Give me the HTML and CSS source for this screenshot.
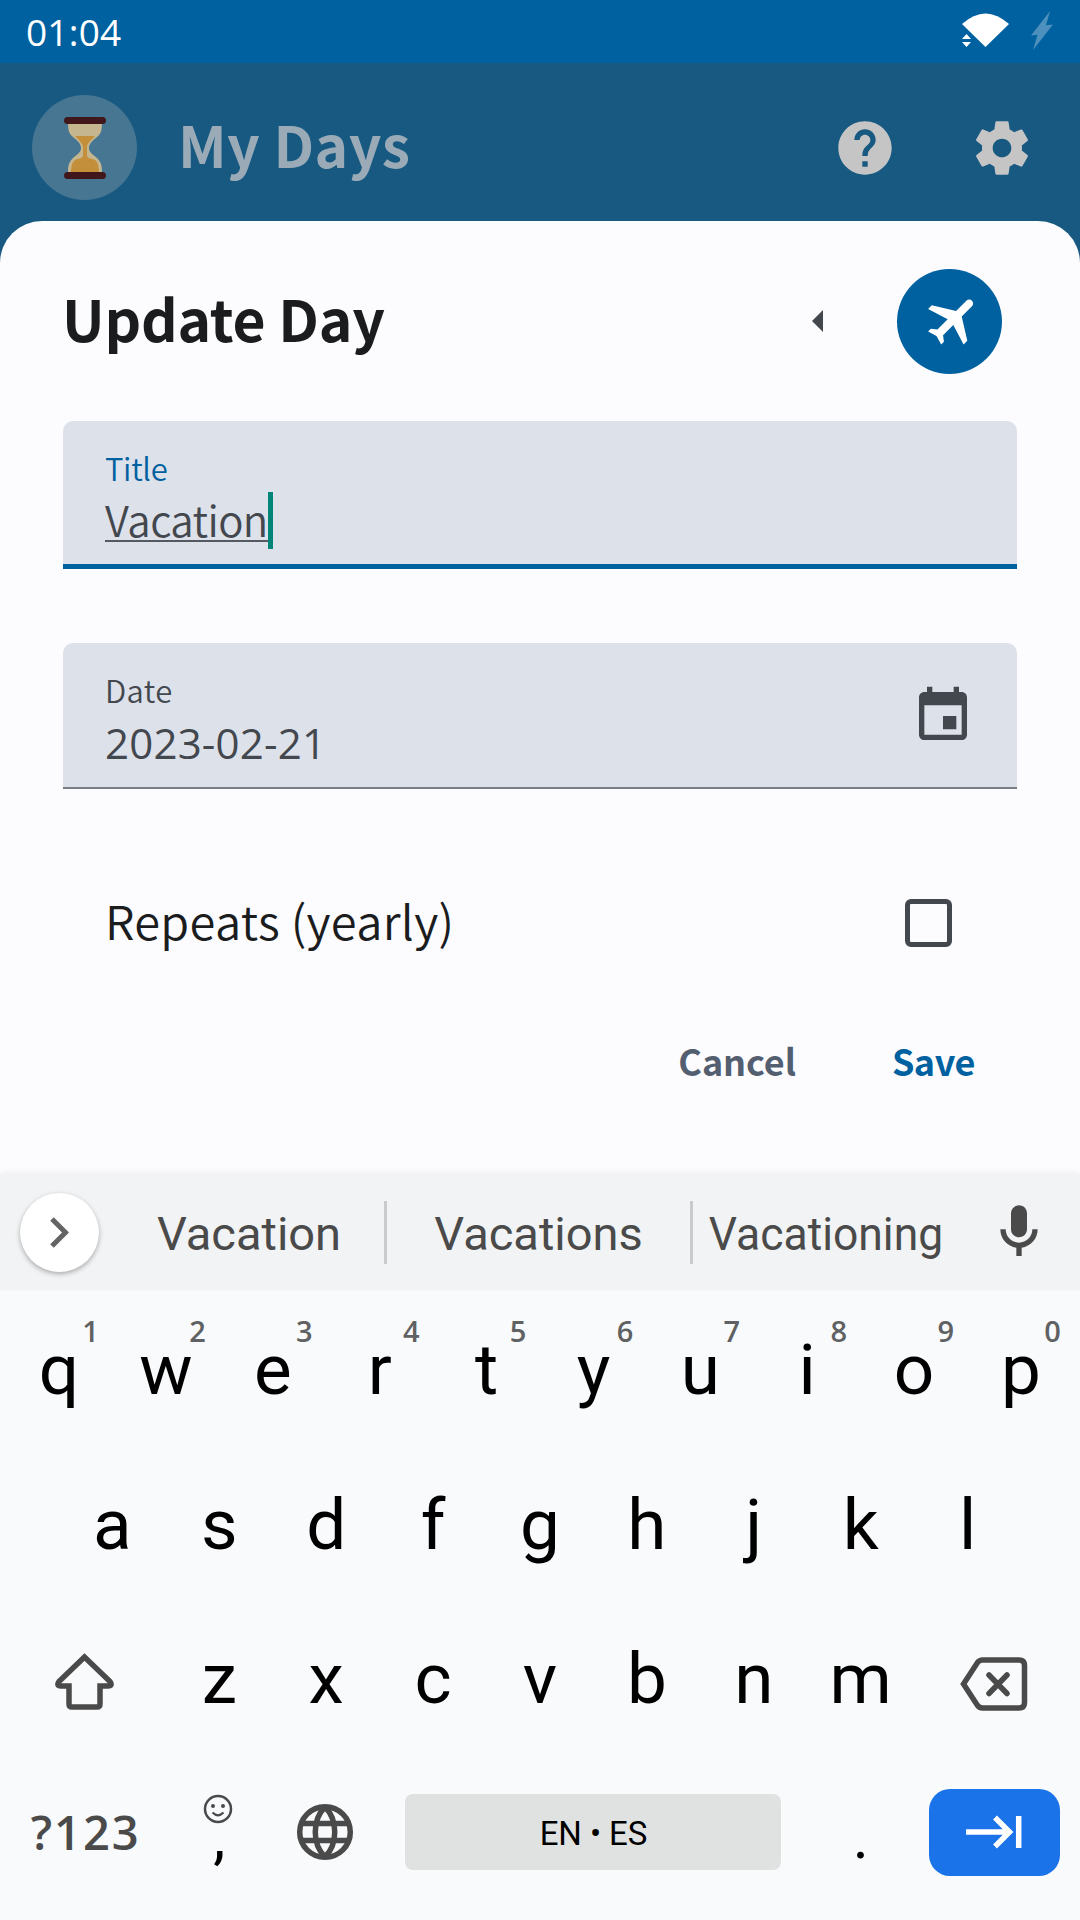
FILE: index.html
```
<!DOCTYPE html>
<html lang="en">
<head>
<meta charset="utf-8">
<title>My Days</title>
<link rel="stylesheet" href="styles.css">
</head>
<body>
<header class="status">
  <span class="clock">01:04</span>
  <svg class="status-icons" viewBox="0 0 96 44">
    <path fill="#fff" d="M4 17Q27.500-4 51 17L27.500 40Z"/>
    <path fill="#fff" d="M4 32l4.500-5 4.500 5zM4 35h9l-4.500 5z"/>
    <path fill="#4d90bd" d="M92 4L73 28.500l6.500-.7L75 43 95 17.500l-7 .7z"/>
  </svg>
</header>

<div class="appbar">
  <span class="logo">
    <svg width="42" height="62" viewBox="0 0 42 62">
      <path fill="#c5b690" d="M4 5h34c0 8-1 12-5 15-5 4-8 7-8 11s3 6 8 10c4 4 5 7 5 15H4c0-8 1-11 5-15 5-4 8-6 8-10s-3-7-8-11c-4-3-5-7-5-15z"/>
      <path fill="#c48f3a" d="M11 19h20c-4 4-8 8-8 11v9c1 3 5 2 8 4 3 2 4 7 4 13H7c0-6 1-11 4-13 3-2 7-1 8-4v-9c0-3-4-7-8-11z"/>
      <rect width="42" height="7" rx="3.500" fill="#40181c"/>
      <rect y="55" width="42" height="7" rx="3.500" fill="#40181c"/>
    </svg>
  </span>
  <h1 class="app-title">My Days</h1>
  <svg class="icon bar-icon" viewBox="0 0 24 24"><path d="M12 2C6.480 2 2 6.480 2 12s4.480 10 10 10 10-4.480 10-10S17.520 2 12 2zm1 17h-2v-2h2v2zm2.070-7.750l-.9.920C13.450 12.900 13 13.500 13 15h-2v-.5c0-1.100.45-2.100 1.170-2.830l1.240-1.260c.37-.36.59-.86.59-1.410 0-1.100-.9-2-2-2s-2 .9-2 2H8c0-2.210 1.790-4 4-4s4 1.790 4 4c0 .88-.36 1.680-.93 2.250z"/></svg>
  <svg class="icon bar-icon" viewBox="0 0 24 24"><path d="M19.430 12.980c.04-.32.07-.64.07-.98s-.03-.66-.07-.98l2.110-1.650c.19-.15.24-.42.12-.64l-2-3.460c-.12-.22-.39-.3-.61-.22l-2.490 1c-.52-.4-1.080-.73-1.690-.98l-.38-2.650C14.460 2.180 14.250 2 14 2h-4c-.25 0-.46.18-.49.42l-.38 2.650c-.61.25-1.170.59-1.690.98l-2.490-1c-.23-.09-.49 0-.61.22l-2 3.460c-.13.22-.07.49.12.64l2.110 1.650c-.04.32-.07.65-.07.98s.03.66.07.98l-2.110 1.650c-.19.15-.24.42-.12.64l2 3.460c.12.22.39.3.61.22l2.490-1c.52.4 1.080.73 1.690.98l.38 2.650c.03.24.24.42.49.42h4c.25 0 .46-.18.49-.42l.38-2.650c.61-.25 1.170-.59 1.690-.98l2.490 1c.23.09.49 0 .61-.22l2-3.460c.12-.22.07-.49-.12-.64l-2.110-1.650zM12 15.500c-1.930 0-3.500-1.570-3.500-3.500s1.570-3.500 3.500-3.500 3.500 1.570 3.500 3.500-1.570 3.500-3.500 3.500z"/></svg>
</div>

<main class="sheet">
  <div class="sheet-head">
    <h2 class="sheet-title">Update Day</h2>
    <svg class="caret-left" viewBox="0 0 11 22"><path d="M11 0v22L0 11z"/></svg>
    <span class="badge">
      <svg width="105" height="105" viewBox="0 0 105 105"><path fill="#fff" transform="translate(56.300 50.300) rotate(45) scale(2.640) translate(-11.500 -12)" d="M21 16v-2l-8-5V3.500c0-.83-.67-1.500-1.500-1.500S10 2.670 10 3.500V9l-8 5v2l8-2.500V19l-2 1.500V22l3.500-1 3.500 1v-1.500L13 19v-5.500l8 2.500z"/></svg>
    </span>
  </div>

  <div class="field field-active">
    <div class="field-text">
      <label class="label">Title</label>
      <div class="value"><span class="composing">Vacation</span><i class="cursor"></i></div>
    </div>
  </div>

  <div class="field">
    <div class="field-text">
      <label class="label label-date">Date</label>
      <div class="value digits">2023-02-21</div>
    </div>
    <svg class="icon date-icon" viewBox="0 0 24 24"><path d="M17 12h-5v5h5v-5zM16 1v2H8V1H6v2H5c-1.110 0-1.990.9-1.990 2L3 19c0 1.100.89 2 2 2h14c1.100 0 2-.9 2-2V5c0-1.100-.9-2-2-2h-1V1h-2zm3 18H5V8h14v11z"/></svg>
  </div>

  <div class="repeat">
    <span class="repeat-label">Repeats (yearly)</span>
    <span class="checkbox"></span>
  </div>

  <div class="actions">
    <span class="btn cancel">Cancel</span>
    <span class="btn save">Save</span>
  </div>
</main>

<section class="keyboard">
  <div class="strip">
    <span class="expand"><svg width="19" height="31" viewBox="0 0 19 31"><path d="M2 2l13.500 13.500L2 29" fill="none" stroke="#646464" stroke-width="5"/></svg></span>
    <span class="word w1">Vacation</span>
    <span class="word w2">Vacations</span>
    <span class="word w3"><span class="squeeze">Vacationing</span></span>
    <svg class="icon mic" viewBox="0 0 24 24"><path d="M12 14c1.660 0 3-1.340 3-3V5c0-1.660-1.340-3-3-3S9 3.340 9 5v6c0 1.660 1.340 3 3 3zM17 11c0 2.760-2.240 5-5 5s-5-2.240-5-5H5c0 3.530 2.610 6.430 6 6.920V21h2v-3.080c3.390-.49 6-3.390 6-6.920z"/></svg>
  </div>

  <div class="row">
    <span class="key">q<sup>1</sup></span><span class="key">w<sup>2</sup></span><span class="key">e<sup>3</sup></span><span class="key">r<sup>4</sup></span><span class="key">t<sup>5</sup></span><span class="key">y<sup>6</sup></span><span class="key">u<sup>7</sup></span><span class="key">i<sup>8</sup></span><span class="key">o<sup>9</sup></span><span class="key">p<sup>0</sup></span>
  </div>
  <div class="row">
    <span class="key">a</span><span class="key">s</span><span class="key">d</span><span class="key">f</span><span class="key">g</span><span class="key">h</span><span class="key">j</span><span class="key">k</span><span class="key">l</span>
  </div>
  <div class="row">
    <span class="key wide"><svg class="glyph shift" width="64" height="64" viewBox="0 0 64 64"><path d="M31.500 7L6 31.500q-3 4.500 2 4.500h8v18q0 3 3 3h25q3 0 3-3V36h8q5 0 2-4.500z"/></svg></span>
    <span class="key">z</span><span class="key">x</span><span class="key">c</span><span class="key">v</span><span class="key">b</span><span class="key">n</span><span class="key">m</span>
    <span class="key wide"><svg class="glyph back" width="68" height="54" viewBox="0 0 68 54"><path d="M3.500 27L17.500 5.500Q19.500 3 22.500 3H59q5.500 0 5.500 5.500v37Q64.500 51 59 51H22.500q-3 0-5-2.500zM29 18l18 18.500M47 18L29 36.500" stroke-linecap="round"/></svg></span>
  </div>
  <div class="row row-bottom">
    <span class="key wide symbols">?123</span>
    <span class="key comma">
      <svg class="smile" width="30" height="30" viewBox="0 0 30 30"><circle cx="15" cy="15" r="13" fill="none" stroke="#4a4a4a" stroke-width="2.500"/><circle cx="10" cy="12" r="2" fill="#4a4a4a"/><circle cx="20" cy="12" r="2" fill="#4a4a4a"/><path d="M9.500 18.500q5.500 5.500 11 0" fill="none" stroke="#4a4a4a" stroke-width="2.200"/></svg>
      <span class="punct">,</span>
    </span>
    <span class="key"><svg class="glyph globe" width="58" height="58" viewBox="0 0 58 58"><circle cx="29" cy="29" r="25.300"/><path d="M5 20.500h48M5 37.500h48M29 4C16 17 16 41 29 54M29 4c13 13 13 37 0 50"/></svg></span>
    <span class="key space"><span class="spacebar">EN • ES</span></span>
    <span class="key"><span class="punct period">.</span></span>
    <span class="key wide"><span class="enter"><svg width="58" height="34" viewBox="0 0 58 34" fill="none" stroke="#fff" stroke-width="5.500"><path d="M1 17h45M30 2.500L44.500 17 30 31.500M53.700 1v32"/></svg></span></span>
  </div>
</section>
</body>
</html>
```
FILE: styles.css
```
* { box-sizing: border-box; }
body {
  margin: 0;
  width: 1080px;
  height: 1920px;
  overflow: hidden;
  background: #185981;
  font-family: "Noto Sans CJK SC", "Open Sans", sans-serif;
  color: #1b1c1e;
}
h1, h2 { margin: 0; }
svg { display: block; flex: none; }
.icon { width: 64px; height: 64px; fill: currentColor; }

.status {
  display: flex;
  justify-content: space-between;
  height: 63px;
  padding: 7px 26px 0 26px;
  background: #0061a0;
  color: #fff;
}
.clock { font: 37px/49px "Open Sans", sans-serif; letter-spacing: 0.2px; }
.status-icons { width: 96px; height: 44px; }

.appbar {
  display: flex;
  align-items: center;
  height: 158px;
  padding: 11px 46px 0 32px;
  color: #c5c5c5;
}
.logo {
  display: flex;
  align-items: center;
  justify-content: center;
  width: 105px;
  height: 105px;
  border-radius: 50%;
  background: #467691;
}
.app-title {
  flex: 1;
  margin: -9px 0 0 41px;
  font-size: 57px;
  line-height: 80px;
  font-weight: 700;
  letter-spacing: 0.4px;
  color: #9aabb7;
}
.bar-icon + .bar-icon { margin-left: 73px; }

.sheet {
  display: flex;
  flex-direction: column;
  height: 953px;
  padding: 0 63px;
  border-radius: 42px 42px 0 0;
  background: #fcfcff;
}
.sheet-head { display: flex; align-items: center; height: 200px; padding-right: 15px; }
.sheet-title { flex: 1; margin: -8px 0 0 -1px; font-size: 57px; line-height: 80px; font-weight: 700; letter-spacing: -0.2px; }
.caret-left { width: 11px; height: 22px; margin-right: 74px; fill: #43474e; }
.badge { width: 105px; height: 105px; border-radius: 50%; background: #0061a0; }

.field {
  display: flex;
  justify-content: space-between;
  height: 146px;
  margin-bottom: 76px;
  padding: 27px 42px 0;
  border-bottom: 2px solid #7a7d85;
  border-radius: 10px 10px 0 0;
  background: #dde1ea;
  color: #43474e;
}
.field-active { height: 148px; margin-bottom: 74px; border-bottom: 5px solid #0061a0; }
.label { display: block; font-size: 31px; line-height: 40px; font-weight: 350; letter-spacing: -0.3px; }
.label-date { letter-spacing: 0.4px; }
.field-active .label { color: #0061a0; }
.value { display: flex; height: 57px; margin-top: 4px; font-size: 42px; line-height: 57px; }
.digits { font-family: "Open Sans", sans-serif; letter-spacing: 0.2px; }
.composing { width: 163px; height: 50px; border-bottom: 2px solid #555961; font-weight: 350; line-height: 54px; letter-spacing: -0.6px; }
.cursor { width: 5px; height: 57px; background: #008577; }
.date-icon { margin-top: 14px; }

.repeat { display: flex; align-items: center; justify-content: space-between; height: 115px; padding: 0 65px 0 42px; }
.repeat-label { margin-top: -5px; font-size: 47px; line-height: 70px; font-weight: 350; letter-spacing: 0.3px; }
.checkbox { width: 47px; height: 48px; border: 5px solid #43474e; border-radius: 6px; }

.actions { display: flex; justify-content: flex-end; gap: 96px; padding: 53px 42px 0 0; }
.btn { font-size: 36px; line-height: 54px; font-weight: 700; }
.cancel { color: #535f70; letter-spacing: -0.1px; }
.save { color: #0061a0; letter-spacing: -0.5px; }

.keyboard { height: 746px; background: #f8fafc; font-family: Roboto, sans-serif; color: #000; }
.strip {
  display: flex;
  align-items: center;
  height: 116px;
  margin-bottom: 3px;
  padding-left: 20px;
  background: #f1f3f4;
  box-shadow: 0 -2px 6px rgba(0, 0, 0, 0.05);
  color: #4a4a4a;
}
.expand {
  display: flex;
  align-items: center;
  justify-content: center;
  width: 79px;
  height: 79px;
  margin-right: 13px;
  border-radius: 50%;
  background: #fff;
  box-shadow: 0 2px 5px rgba(0, 0, 0, 0.3);
}
.word { display: flex; justify-content: center; align-items: center; height: 63px; padding-top: 4px; font-size: 47px; line-height: 64px; white-space: nowrap; }
.w1 { width: 275px; padding-left: 2px; border-right: 3px solid #c8cacc; }
.w2 { width: 306px; border-right: 3px solid #c8cacc; }
.w3 { width: 266px; }
.squeeze { transform: scaleX(0.945); }
.mic { margin-left: 28px; }

.row { display: flex; justify-content: center; height: 154.5px; }
.row-bottom { height: 151px; }
.key {
  position: relative;
  display: flex;
  align-items: center;
  justify-content: center;
  width: 106.9px;
  font-size: 71px;
  line-height: 80px;
}
.key sup {
  position: absolute;
  top: 21px;
  left: 75px;
  width: 20px;
  font: 600 29px/34px "Open Sans", sans-serif;
  text-align: center;
  color: #5f6162;
}
.wide { width: 160.3px; }
.space { width: 427.6px; }
.glyph { fill: none; stroke: #4a4a4a; stroke-width: 5.500; }
.shift { margin: 6px 2px 0 0; }
.back { margin-top: 10px; }
.globe { margin-right: 2px; }
.symbols { font: 600 47px/78px "Open Sans", sans-serif; letter-spacing: 2px; color: #4a4a4a; }
.comma { flex-direction: column; }
.smile { margin: -20px 2px 0 0; }
.punct { font-size: 61px; line-height: 26px; }
.period { margin-top: 9px; }
.spacebar {
  width: 376px;
  height: 76px;
  border-radius: 8px;
  background: #e0e2e1;
  font-size: 33px;
  line-height: 79px;
  letter-spacing: -0.1px;
  text-align: center;
}
.enter {
  display: flex;
  align-items: center;
  justify-content: center;
  width: 131px;
  height: 87px;
  border-radius: 21px;
  background: #1a73e8;
}
```
